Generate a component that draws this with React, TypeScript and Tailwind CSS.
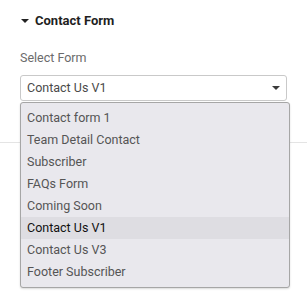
import React from 'react';

const FORMS = [
  'Contact form 1',
  'Team Detail Contact',
  'Subscriber',
  'FAQs Form',
  'Coming Soon',
  'Contact Us V1',
  'Contact Us V3',
  'Footer Subscriber',
];

const Caret: React.FC<{ className?: string }> = ({ className }) => (
  <svg viewBox="0 0 10 5" className={className} fill="currentColor">
    <path d="M0 0h10L5 5z" />
  </svg>
);

export default function App() {
  const selected = 'Contact Us V1';

  return (
    <div className="relative w-[307px] h-[291px] bg-white overflow-hidden font-['Roboto',sans-serif]">
      <div className="flex items-center h-[40px] pl-[21px] pt-[1px]">
        <Caret className="w-[8px] h-[4px] text-[#222]" />
        <span className="ml-[6px] text-[13px] font-bold text-[#1f1f1f]">Contact Form</span>
      </div>

      <div className="px-[20px] pt-[9px]">
        <label className="block text-[12.5px] leading-[18px] text-[#6b6b6b]">Select Form</label>
        <div className="mt-[8px] flex items-center justify-between h-[26px] border border-[#c9c9c9] rounded-[3px] pl-[6px] pr-[6px]">
          <span className="text-[12.5px] text-[#4a4a4a]">{selected}</span>
          <Caret className="w-[8px] h-[4px] text-[#3a3a3a]" />
        </div>
      </div>

      <div className="mt-[41px] border-t border-[#e4e4e4]" />

      <ul className="absolute left-[20px] top-[102px] w-[270px] py-[4px] bg-[#e9e8ed] border border-[#a6a6a6] rounded-[3px] shadow-[0_1px_2px_rgba(0,0,0,0.15)]">
        {FORMS.map((f) => (
          <li
            key={f}
            className={`h-[22px] flex items-center px-[6px] text-[12.5px] ${
              f === selected ? 'bg-[#dedde2] text-[#111]' : 'text-[#555]'
            }`}
          >
            {f}
          </li>
        ))}
      </ul>
    </div>
  );
}
